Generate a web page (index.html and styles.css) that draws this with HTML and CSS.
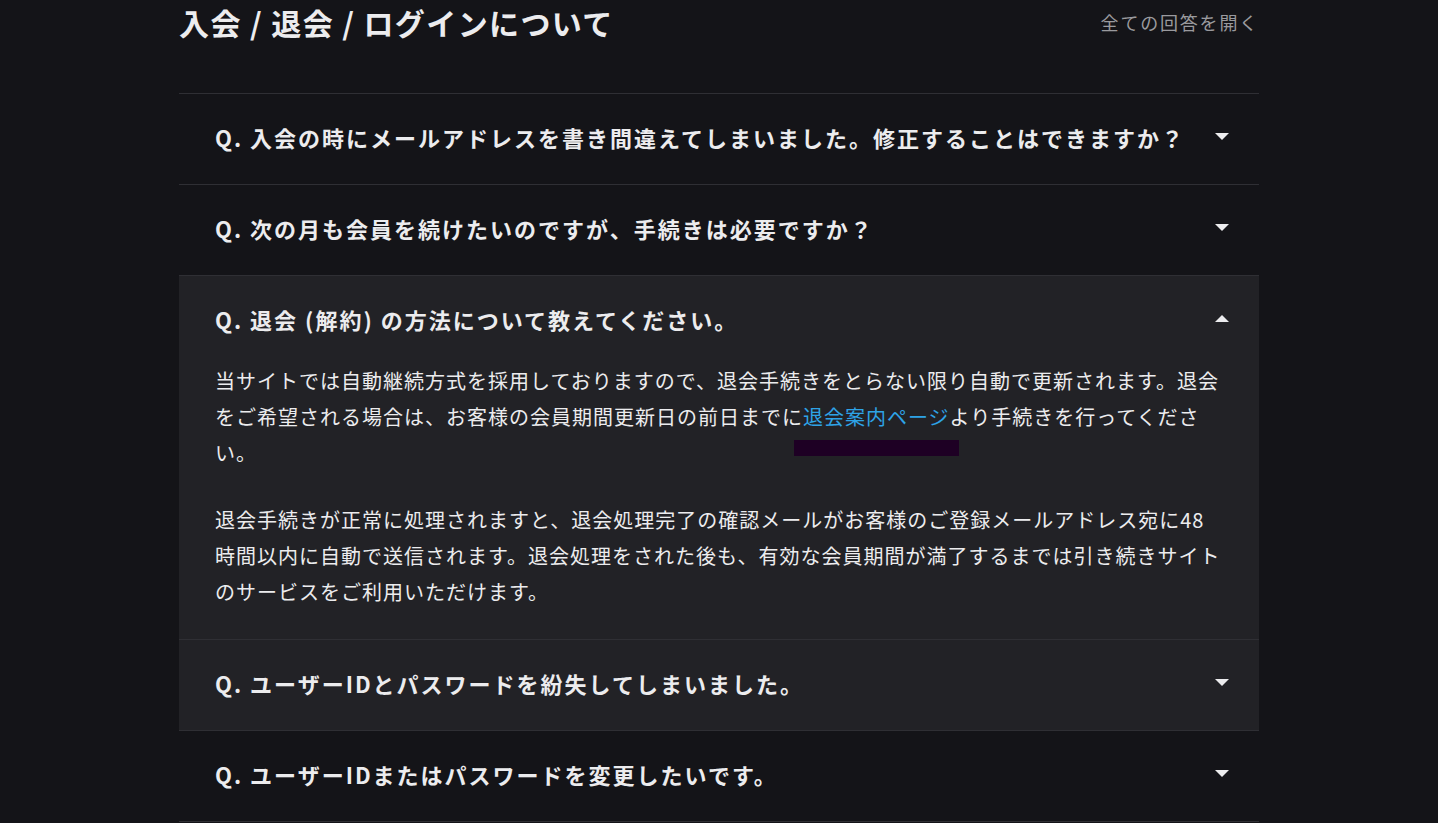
FILE: index.html
```html
<!DOCTYPE html>
<html lang="ja">
<head>
    <meta charset="UTF-8">
    <meta name="viewport" content="width=device-width, initial-scale=1.0">
    <title>よくある質問</title>
    <link rel="stylesheet" href="styles.css">
</head>
<body>
<div class="faq">
    <div class="faq-header">
        <h2 class="faq-title">入会 / 退会 / ログインについて</h2>
        <span class="open-all">全ての回答を開く</span>
    </div>

    <div class="faq-list">
        <div class="faq-item">
            <div class="faq-q">
                <span>Q. 入会の時にメールアドレスを書き間違えてしまいました。修正することはできますか？</span>
                <i class="arrow"></i>
            </div>
        </div>
        <div class="faq-item">
            <div class="faq-q">
                <span>Q. 次の月も会員を続けたいのですが、手続きは必要ですか？</span>
                <i class="arrow"></i>
            </div>
        </div>
        <div class="faq-item open">
            <div class="faq-q">
                <span>Q. 退会 (解約) の方法について教えてください。</span>
                <i class="arrow"></i>
            </div>
            <div class="faq-a">
                <p>当サイトでは自動継続方式を採用しておりますので、退会手続きをとらない限り自動で更新されます。退会をご希望される場合は、お客様の会員期間更新日の前日までに<a href="#" class="link">退会案内ページ</a>より手続きを行ってください。</p>
                <p>退会手続きが正常に処理されますと、退会処理完了の確認メールがお客様のご登録メールアドレス宛に48時間以内に自動で送信されます。退会処理をされた後も、有効な会員期間が満了するまでは引き続きサイトのサービスをご利用いただけます。</p>
            </div>
        </div>
        <div class="faq-item hover">
            <div class="faq-q">
                <span>Q. ユーザーIDとパスワードを紛失してしまいました。</span>
                <i class="arrow"></i>
            </div>
        </div>
        <div class="faq-item">
            <div class="faq-q">
                <span>Q. ユーザーIDまたはパスワードを変更したいです。</span>
                <i class="arrow"></i>
            </div>
        </div>
    </div>
</div>
</body>
</html>
```

FILE: styles.css
```css
/* Основа */
body {
    margin: 0;
    background-color: #141418;
    color: #ececee;
    font-family: "Noto Sans CJK JP", "Noto Sans", sans-serif;
}

.faq {
    width: 1080px;
    margin: 0 auto;
}

.faq-header {
    display: flex;
    justify-content: space-between;
    align-items: center;
    height: 44px;
    margin-bottom: 49px;
}

.faq-title {
    margin: 0;
    font-size: 30px;
    line-height: 44px;
    font-weight: bold;
    letter-spacing: 1.4px;
}

.open-all {
    font-size: 18px;
    letter-spacing: 1.8px;
    color: #9a9a9e;
    cursor: pointer;
}

/* Список вопросов */
.faq-list {
    border-bottom: 1px solid #2f2f34;
}

.faq-item {
    border-top: 1px solid #2f2f34;
}

.faq-item.open,
.faq-item.hover {
    background-color: #222226;
}

.faq-q {
    display: flex;
    justify-content: space-between;
    align-items: center;
    padding: 28px 30px 32px 36px;
    font-size: 22px;
    line-height: 30px;
    font-weight: bold;
    letter-spacing: 2px;
    cursor: pointer;
}

.faq-item.open .faq-q {
    padding-bottom: 29px;
}

.arrow {
    width: 0;
    height: 0;
    margin-top: -2px;
    border-left: 7px solid transparent;
    border-right: 7px solid transparent;
    border-top: 7px solid #ececee;
}

.faq-item.open .arrow {
    border-top: none;
    border-bottom: 7px solid #ececee;
}

.faq-a {
    padding: 0 35px 29px 36px;
    font-size: 20px;
    line-height: 36px;
    letter-spacing: 1px;
}

.faq-a p {
    margin: 0 0 31px;
}

.faq-a p:last-child {
    margin-bottom: 0;
}

.link {
    position: relative;
    color: #2ea3e6;
    text-decoration: none;
}

/* след фокуса под ссылкой */
.link::after {
    content: "";
    position: absolute;
    left: -9px;
    right: -9px;
    top: 38px;
    height: 16px;
    background-color: #1e0024;
}
```
